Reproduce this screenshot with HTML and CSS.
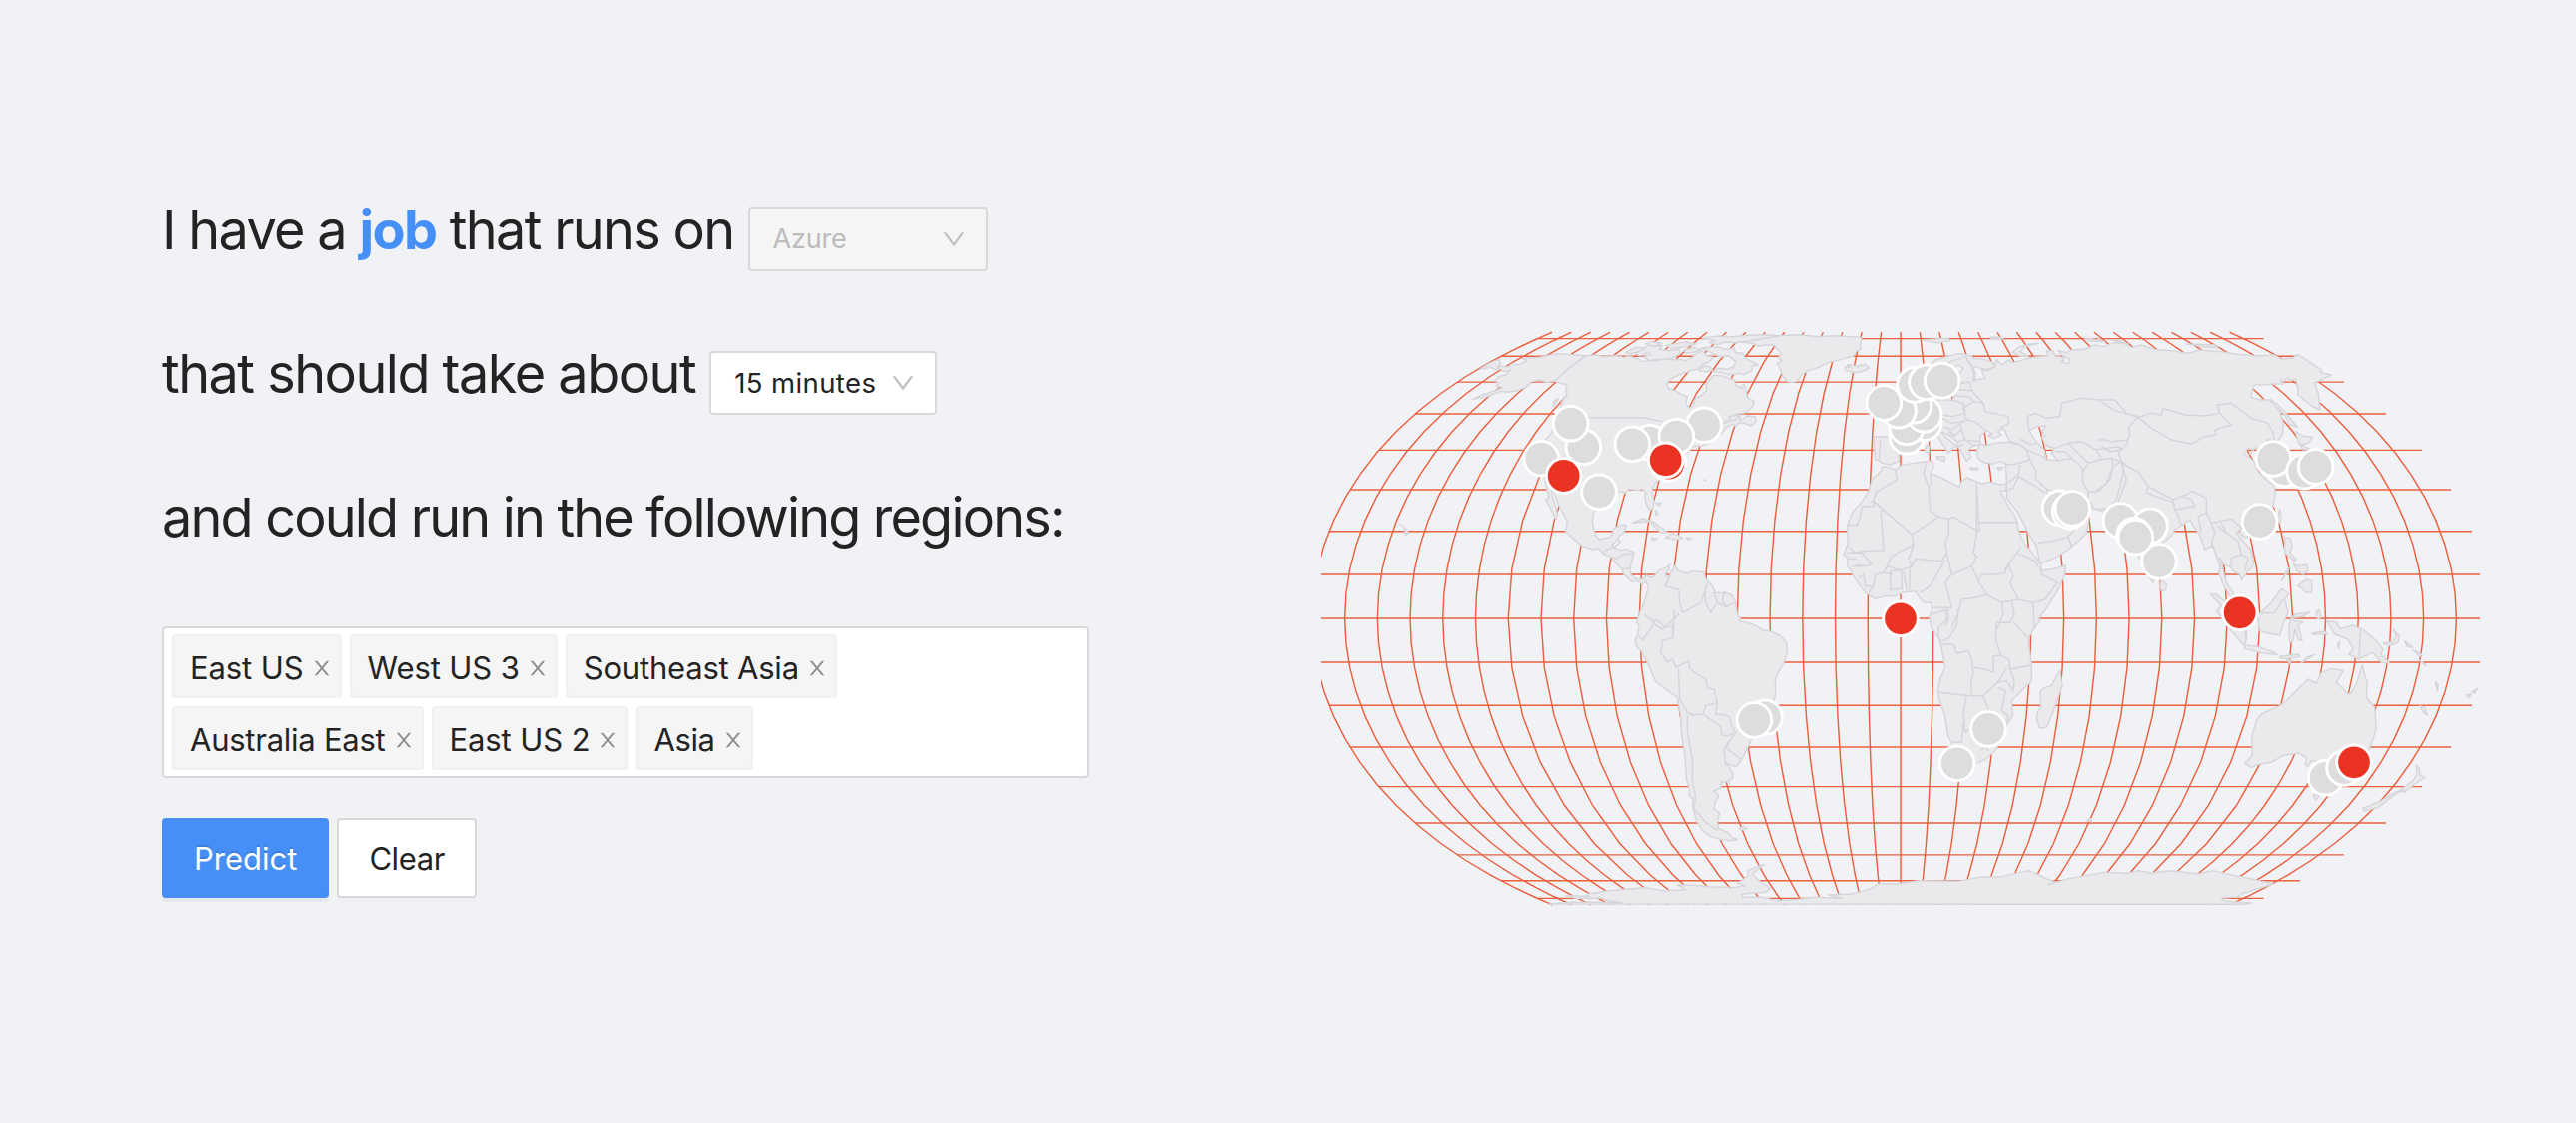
FILE: index.html
```html
<!DOCTYPE html>
<html lang="en">
<head>
<meta charset="utf-8">
<title>Region predictor</title>
<link rel="stylesheet" href="styles.css">
</head>
<body>
<svg class="defs" aria-hidden="true">
  <symbol id="down" viewBox="64 64 896 896"><path d="M884 256h-75c-5.1 0-9.9 2.5-12.9 6.6L512 654.2 227.9 262.6c-3-4.1-7.8-6.6-12.9-6.6h-75c-6.5 0-10.3 7.4-6.5 12.7l352.6 486.1c12.8 17.6 39 17.6 51.7 0l352.6-486.1c3.9-5.3.1-12.7-6.4-12.7z"/></symbol>
  <symbol id="close" viewBox="64 64 896 896"><path d="M563.8 512l262.5-312.9c4.4-5.2.7-13.1-6.1-13.1h-79.8c-4.7 0-9.2 2.1-12.3 5.7L511.6 449.8 295.1 191.7c-3-3.6-7.5-5.7-12.3-5.7H203c-6.8 0-10.5 7.9-6.1 13.1L459.4 512 196.9 824.9A7.95 7.95 0 0 0 203 838h79.8c4.7 0 9.2-2.1 12.3-5.7l216.5-258.1 216.5 258.1c3 3.6 7.5 5.7 12.3 5.7h79.8c6.8 0 10.5-7.9 6.1-13.1L563.8 512z"/></symbol>
</svg>
<main class="page">
  <section class="form">
    <div class="line line-job"><span>I have a <strong>job</strong> that runs on</span>
      <div class="select select-cloud disabled"><span>Azure</span><svg><use href="#down"/></svg></div></div>
    <div class="line line-time"><span>that should take about</span>
      <div class="select select-time"><span>15 minutes</span><svg><use href="#down"/></svg></div></div>
    <div class="line line-regions"><span>and could run in the following regions:</span></div>
    <div class="tags">
      <div class="tag"><span>East US</span><svg><use href="#close"/></svg></div>
      <div class="tag"><span>West US 3</span><svg><use href="#close"/></svg></div>
      <div class="tag"><span>Southeast Asia</span><svg><use href="#close"/></svg></div>
      <div class="tag"><span>Australia East</span><svg><use href="#close"/></svg></div>
      <div class="tag"><span>East US 2</span><svg><use href="#close"/></svg></div>
      <div class="tag"><span>Asia</span><svg><use href="#close"/></svg></div>
    </div>
    <div class="actions">
      <button class="button primary">Predict</button>
      <button class="button clear">Clear</button>
    </div>
  </section>
  <svg class="map" viewBox="0 0 3480 2610">
    <g id="graticule" class="graticule"></g>
    <g id="land" class="land"></g>
    <g id="borders" class="borders"></g>
    <g id="markers" class="markers"></g>
  </svg>
</main>
<script src="map.js"></script>
</body>
</html>
```
FILE: styles.css
```css
* { box-sizing: border-box; }
body { margin: 0; background: #f0f2f5; color: #232323; font-family: Inter, "Noto Sans", sans-serif; }
.defs { display: none; }
.page { display: flex; height: 1124px; overflow: hidden; }
.form { width: 1322px; padding: 157px 232px 0 162px; flex: none; }
.line { display: flex; align-items: center; height: 144px; font-size: 54px; white-space: nowrap; }
.line-job { gap: 14px; letter-spacing: -1.68px; }
.line-time { gap: 14px; letter-spacing: -1.52px; }
.line-regions { letter-spacing: -1.83px; }
.line strong { color: #458ff7; font-weight: 700; }
.select { display: flex; align-items: center; justify-content: space-between; height: 64px; margin-top: 19px; padding: 0 20px 0 23px; border: 2px solid #d9d9d9; border-radius: 4px; background: #fff; font-size: 27px; letter-spacing: 0; }
.select svg { width: 24px; height: 24px; fill: #bfbfbf; }
.select-cloud { width: 240px; letter-spacing: -0.2px; }
.select-time { width: 228px; font-size: 27.5px; letter-spacing: 0.4px; }
.disabled { background: #f5f5f5; color: #bcbcbc; }
.tags { display: flex; flex-wrap: wrap; gap: 8px; align-content: flex-start; width: 928px; height: 152px; margin-top: 38px; padding: 6px 8px; border: 2px solid #d9d9d9; border-radius: 4px; background: #fff; }
.tag { display: flex; align-items: center; gap: 8px; height: 64px; padding: 0 8px 0 16px; border: 2px solid #f0f0f0; border-radius: 4px; background: #f5f5f5; font-size: 31px; letter-spacing: -0.1px; white-space: nowrap; }
.tag span { padding-top: 3px; }
.tag svg { width: 20px; height: 20px; margin-top: 3px; fill: #8c8c8c; }
.tag:nth-child(3) { margin-right: 200px; letter-spacing: -0.2px; }
.tag:nth-child(4) { letter-spacing: -0.25px; }
.tag:nth-child(6) { letter-spacing: -0.4px; }
.actions { display: flex; gap: 8px; margin-top: 40px; }
.button { height: 80px; padding: 0 30px; border: 2px solid #d9d9d9; border-radius: 4px; background: #fff; color: #232323; font: 31px Inter, "Noto Sans", sans-serif; box-shadow: 0 4px 0 rgba(0, 0, 0, .016); }
.clear { letter-spacing: -0.4px; }
.primary { border-color: #458ff7; background: #458ff7; color: #fff; text-shadow: 0 -2px 0 rgba(0, 0, 0, .12); box-shadow: 0 4px 0 rgba(0, 0, 0, .045); }
.map { width: 1160px; height: 870px; margin-top: 184px; flex: none; }
.graticule { fill: none; stroke: #ec5f3f; stroke-width: 4.3; }
.land { fill: #eaeaec; fill-rule: evenodd; stroke: #d6d6da; stroke-width: 4.3; stroke-linejoin: round; }
.borders { fill: none; stroke: #d6d6da; stroke-width: 4.3; stroke-linejoin: round; }
.markers { fill: #ddd; stroke: #fff; stroke-width: 8.7; }
.markers .active { fill: #ea3323; }
```
FILE: map.js
```js
// The map is digitised in six sheets; a letter switches to that sheet's origin.
const SHEETS = { a: [-36, 408], b: [1194, 408], c: [2334, 408], d: [-36, 1278], e: [1194, 1278], f: [2334, 1278] };
function points(text) {
  let o = SHEETS.a;
  const out = [];
  for (const t of text.trim().split(/\s+/)) {
    if (SHEETS[t]) o = SHEETS[t];
    else { const [x, y] = t.split(',').map(Number); out.push([x + o[0], y + o[1]]); }
  }
  return out;
}
const trace = (text, close) => 'M' + points(text).map(p => p.join(' ')).join('L') + (close ? 'Z' : '');
function add(id, tag, attrs) {
  const el = document.createElementNS('http://www.w3.org/2000/svg', tag);
  for (const k in attrs) el.setAttribute(k, attrs[k]);
  document.getElementById(id).appendChild(el);
}

// Equal Earth projection
const S = 653, CX = 1740, CY = 1305;
function project(lon, lat) {
  const l = lon * Math.PI / 180, q = Math.asin(Math.sqrt(3) / 2 * Math.sin(lat * Math.PI / 180));
  const q2 = q * q, q6 = q2 * q2 * q2;
  const x = l * Math.cos(q) / (Math.sqrt(3) / 2 * (1.340264 - 0.243318 * q2 + q6 * (0.006251 + 0.034164 * q2)));
  const y = q * (1.340264 - 0.081106 * q2 + q6 * (0.000893 + 0.003796 * q2));
  return (CX + S * x).toFixed(1) + ' ' + (CY - S * y).toFixed(1);
}
for (let lon = -180; lon < 180; lon += 10) {
  const p = [], step = Math.abs(lon) > 125 ? 5.625 : 11.25;
  for (let lat = -90; lat <= 90; lat += step) p.push(project(lon, lat));
  add('graticule', 'path', { d: 'M' + p.join('L') });
}
for (let lat = -80; lat <= 80; lat += 10) add('graticule', 'path', { d: 'M' + project(-180, lat) + 'L' + project(180, lat) });

const LAND = [
  // Americas
  `a 512,148 540,130 568,118 575,132 565,138 600,140 606,132 628,135 655,122 640,116 690,112 718,106 745,101 790,104 830,107 862,105 880,110 920,107 945,112 960,108 990,118 1000,125 1030,120 1040,123 1070,115 1085,120 1110,118 1130,122 1150,112 1160,102 1180,92 1195,108 1215,112 1200,125 1180,135 1165,148 1145,152 1130,158 1110,165 1080,180 1074,192 1078,207 1100,213 1118,224 1135,230 1130,248 1140,265 1152,258 1160,235 1180,225 1194,210 1190,195 1200,180 1215,165 1240,168 b 30,176 45,180 52,196 68,205 75,192 82,215 85,232 105,245 103,258 92,268 75,280 50,283 30,296 14,310 28,306 50,292 64,290 62,303 85,288 108,290 112,306 95,318 78,310 60,308 50,320 40,312 20,325 10,338 a 1225,348 1200,370 1180,378 1150,380 1140,395 1125,400 1120,430 1110,450 1085,465 1050,480 1035,495 1028,515 1035,545 1030,570 1018,568 1008,540 1010,520 1000,508 985,512 960,508 950,520 930,515 910,520 870,560 853,580 850,610 858,645 870,660 905,652 915,625 940,615 952,618 945,638 932,648 925,660 912,672 915,685 935,692 950,688 975,698 970,720 963,745 965,765 980,778 1000,780 1012,768 1030,775 1040,765 1050,752 1070,745 1082,735 1080,750 1068,765 1080,775 1084,760 1092,752 1096,738 1110,755 1135,762 1150,755 1185,758 1188,775 1210,800 1220,820 1245,822 b 15,818 40,828 48,845 52,860 55,885 65,900 e 60,35 85,40 110,48 130,62 152,65 182,78 202,98 206,128 195,160 175,195 169,215 170,255 162,290 150,325 110,370 95,395 80,430 62,460 52,473 35,468 20,460 42,492 40,508 25,518 5,520 d 1238,522 1235,537 1215,545 1230,560 1218,582 1215,600 1232,612 1225,640 1228,658 1258,672 1270,685 1285,692 1258,695 1230,690 1205,682 1180,665 1165,640 1158,620 1150,590 1153,570 1140,560 1142,540 1132,510 1128,440 1118,380 1115,320 1105,265 1070,240 1040,218 1020,170 1000,130 980,108 979,90 985,80 990,50 982,40 990,15 a 992,880 1005,850 1018,805 1010,785 1000,795 985,785 970,788 945,765 940,750 920,730 905,712 885,705 870,687 850,690 820,680 790,655 770,635 775,605 765,585 752,562 745,545 728,500 728,525 740,560 745,580 742,598 738,595 728,573 710,540 720,535 712,500 708,480 695,440 692,410 710,360 730,335 750,290 757,250 765,235 775,225 770,212 774,195 755,190 735,183 715,188 690,180 668,185 648,203 625,212 600,216 575,215 540,228 490,238 520,225 560,212 580,203 562,198 570,190 558,182 568,170 590,165 605,150 585,155 570,143 560,150 545,142`,
  // Greenland and Iceland
  `b 118,78 100,70 60,65 40,60 70,57 130,52 180,47 240,44 300,50 340,47 400,50 425,52 430,60 423,75 428,85 412,95 405,108 370,118 340,124 320,132 300,142 270,152 247,165 238,182 220,188 204,184 190,165 186,150 175,130 190,122 177,113 188,103 178,90 165,76 140,75`,
  `b 378,140 395,142 385,134 415,138 440,133 452,145 430,155 408,158 380,152`,
  // Arctic islands
  `a 990,92 1020,75 1060,78 1050,88 1080,92 1110,88 1115,100 1095,112 1060,118 1020,122 1005,110 1025,104 1015,97 995,108 980,103`,
  `a 950,97 980,82 1010,84 990,94 965,102`,
  `a 1010,70 1030,65 1060,70 1040,78 1020,76`,
  `a 1070,76 1130,66 1160,72 1120,82 1085,84`,
  `a 1125,90 1155,82 1175,90 1150,98 1130,98`,
  `a 1180,55 1230,48 b 40,50 90,46 140,44 180,47 120,58 90,62 50,68 20,66 a 1225,74 1200,68 1220,62`,
  `a 1175,84 1225,80 b 20,88 45,85 50,98 70,100 80,115 100,125 118,135 100,138 98,152 75,165 60,160 30,165 10,158 a 1215,155 1225,145 1255,148 b 45,140 50,125 30,108 a 1230,110 1210,100 1195,92`,
  `a 1180,140 1200,138 1210,152 1190,155 1170,152`,
  `b 30,290 62,285 50,300 35,302`,
  // Africa
  `b 490,442 500,440 530,450 550,436 600,428 640,423 645,440 636,462 660,470 690,485 722,502 730,485 745,474 790,492 815,487 845,495 866,492 862,515 845,512 870,560 892,592 903,640 920,675 942,700 968,733 970,752 1000,750 1042,738 1040,765 1020,810 990,860 960,900 e 965,35 942,65 930,90 935,130 940,165 940,215 915,240 880,275 883,320 867,345 855,385 830,425 800,452 775,463 740,466 715,475 705,440 700,400 688,380 680,320 662,270 658,245 665,210 680,175 670,120 660,85 640,58 633,25 b 634,890 640,870 638,850 618,850 605,838 590,815 560,818 530,830 500,830 470,838 440,820 418,790 400,762 385,735 388,715 375,705 388,670 385,620 400,580 430,545 450,515 460,480 490,450`,
  `e 1025,183 1032,230 1020,265 1000,320 985,355 965,358 955,330 958,310 968,290 965,250 975,238 1000,228`,
  // Eurasia with the Black Sea, Caspian and Aral basins left open
  `b 490,430 480,422 470,420 468,400 465,352 500,350 520,352 540,340 515,312 540,300 570,285 590,260 600,230 610,210 640,240 700,240 712,228 705,208 726,200 728,190 755,187 730,188 714,170 735,145 720,135 700,150 690,200 660,230 640,200 600,195 600,170 630,140 650,120 690,108 725,100 760,108 765,115 790,116 825,127 828,142 800,148 770,140 760,148 772,160 770,180 800,175 790,150 810,152 830,140 835,118 850,135 870,120 885,128 920,118 945,112 990,107 985,92 1005,92 1010,108 1035,112 1038,120 1028,125 1050,132 1056,118 1035,108 1020,92 1045,98 1060,90 1100,88 1130,75 1155,80 1190,68 1230,72 c 40,60 65,62 100,82 130,75 170,88 220,92 270,100 305,90 370,95 410,102 480,108 530,105 550,117 580,115 600,104 625,120 655,140 672,150 668,158 700,165 665,182 650,190 662,225 665,270 640,258 600,225 600,205 592,175 580,182 568,175 550,187 548,176 555,192 520,192 500,195 468,195 458,233 488,240 520,240 545,275 556,310 553,345 540,362 505,360 530,400 530,450 510,450 500,420 490,385 470,385 455,402 465,390 450,385 436,404 450,410 468,425 480,455 505,480 525,495 532,515 525,560 512,590 485,630 455,648 440,655 425,640 430,625 415,640 440,670 458,690 468,735 450,755 430,782 425,765 405,755 395,740 380,738 365,715 385,790 400,812 410,830 395,830 375,795 362,760 365,740 352,700 345,678 320,690 310,660 302,640 285,618 275,600 255,615 232,628 220,648 195,670 185,720 165,790 148,765 130,725 105,690 70,640 45,620 25,580 0,570 b 1125,568 1120,550 1095,545 1055,540 1005,515 985,508 990,530 1020,560 1060,560 1075,570 1112,600 1105,640 1085,660 1050,690 1010,715 965,733 955,680 930,640 900,580 865,535 866,500 862,432 845,425 822,433 800,430 778,415 775,395 785,375 765,378 750,390 758,410 745,425 732,400 718,380 715,365 690,345 665,335 680,350 715,380 705,383 690,400 655,345 630,350 600,370 565,400 540,405 540,425 515,435 M0`,
  // Indian Ocean and East Asian islands
  `c 190,780 205,795 203,812 190,815 186,800`,
  `c 545,570 549,590 546,612 538,600`,
  `c 515,240 535,250 555,270 575,295 598,322 575,315 560,285 535,262`,
  `c 592,335 612,348 645,352 630,370 610,375 635,388 615,390 600,365`,
  `c 630,390 640,420 620,450 575,480 560,500 550,470 600,430`,
  `c 560,655 575,655 583,680 575,700 595,718 590,725 572,710 560,700`,
  `c 585,732 600,740 625,735 630,755 615,765 598,755`,
  `c 598,800 625,780 642,785 640,820 622,818 610,805`,
  `c 550,783 572,745 568,760`,
  // Maritime South-East Asia
  `c 338,825 355,825 400,865 440,900 f 445,35 445,90 437,108 400,65 355,5 c 370,860`,
  `c 485,882 520,850 550,808 572,822 560,840 570,880 f 560,30 545,78 510,72 485,65 478,15`,
  `f 440,108 480,112 525,128 537,136 495,132 440,118`,
  `c 580,900 592,885 630,880 635,878 615,892 590,895 f 585,20 588,35 615,38 600,48 612,95 600,90 590,60 585,95 575,100 572,55 580,20`,
  `f 685,35 715,38 725,58 765,48 800,65 835,95 855,120 848,135 875,162 850,160 825,130 780,150 752,135 765,120 750,90 710,75 700,58`,
  `f 855,102 885,98 895,80 885,60 905,80 900,100 875,110`,
  `f 545,142 600,135 605,142 570,148 548,148`, `f 610,160 630,142 648,137`, `f 640,72 680,66 688,74 645,75`, `f 565,150 580,155 575,162`, `c 655,878 662,870 668,890 664,900 656,895`, `f 718,105 725,98 722,118`,
  `f 920,95 945,115 928,112`, `f 945,122 970,135 965,142`, `f 962,150 985,168 970,160`, `f 1012,218 1020,225 1018,245`, `f 1105,258 1120,255 1112,267`, `f 1122,248 1140,237 1130,252`, `f 966,290 980,295 988,318 975,308`,
  // Australia and New Zealand
  `f 793,167 800,200 808,220 805,265 830,295 835,355 825,390 810,430 760,500 700,500 650,455 640,455 630,472 622,468 625,445 600,432 555,440 520,460 485,465 460,475 440,463 462,440 462,380 475,335 490,315 545,290 570,270 600,240 630,210 655,222 670,190 700,178 735,185 715,220 755,258 775,225`,
  `f 645,558 670,557 652,573`,
  `f 955,468 965,480 965,500 982,505 950,525 920,550 905,545 945,515 957,495`,
  `f 920,542 900,550 840,595 800,606 795,598 850,575 890,550`,
  // Mediterranean, Arctic and Atlantic islands
  `b 655,410 680,412 678,425 658,418`, `b 625,375 632,380 630,400 618,395`, `b 755,445 780,445 778,450 758,450`, `b 835,445 855,442 845,452`, `b 610,60 650,57 690,55 695,62 660,68 635,65`, `b 815,52 850,52 855,57 820,57`, `b 882,98 900,82 935,72 960,70 920,80 905,95 930,110 905,108`, `b 1100,55 1130,58 1160,65 1110,62`, `c 0,52 10,62 0,64`, `c 265,72 350,75 360,83 310,80`,
  `a 970,610 1000,597 1030,605 1075,638 1055,638 1020,605`, `a 1070,655 1090,640 1122,655 1100,660`, `a 1027,655 1045,658 1032,662`, `a 1133,655 1148,657 1136,661`, `a 1040,550 1055,550 1050,558`, `a 1040,572 1048,582 1040,587`, `a 285,622 298,638 290,648`, `a 270,614 282,618`, `a 735,243 748,237 732,260`, `a 1185,480 1191,482`,
  `e 60,658 75,652 85,660 65,663`, `e 1105,635 1115,628 1120,638`, `e 30,520 32,525`,
  // Antarctica
  `d 720,885 790,880 880,880 940,882 890,873 880,868 800,868 770,860 840,862 835,855 900,845 960,840 1010,836 1060,845 1130,842 1105,828 1140,828 1200,833 1260,835 e 30,838 80,830 55,823 90,800 85,785 110,775 135,766 100,795 120,815 155,838 140,850 70,855 70,865 130,865 175,875 230,872 290,865 370,868 330,858 400,855 450,842 480,825 540,825 600,815 720,817 780,805 850,803 930,785 960,797 985,810 1010,818 990,828 1040,812 1100,800 1160,790 1230,793 f 80,795 120,785 160,792 220,785 300,795 345,785 410,800 440,805 525,825 430,855 420,863 370,868 380,877 460,882 440,886`
];
const HOLES = `b 785,350 803,332 822,342 810,348 825,356 850,345 838,335 855,325 875,365 905,375 870,367 830,370 800,378 785,370|b 932,332 955,320 985,318 970,332 982,350 970,352 985,378 1008,385 1000,400 1020,422 985,420 978,390 950,360`;
LAND.forEach(t => {
  const holed = t.endsWith('M0');
  let d = trace(t.replace(' M0', ''), true);
  if (holed) d += HOLES.split('|').map(h => trace(h, true)).join('');
  add('land', 'path', { d });
});

const BORDERS = [
  // North and Central America
  'a 735,183 780,145 830,107', 'a 740,293 1000,293 1025,298 1060,305', 'a 885,705 890,690 905,688 912,672', 'a 920,720 940,705 970,700', 'a 915,685 935,665 925,660', 'a 940,750 965,745', 'a 905,712 920,715',
  // South America
  'a 1080,775 1068,800 1110,812 1112,850 1120,880 1140,870 1175,850 1188,815 1195,790', 'a 1188,815 1190,850 1205,880 1225,850 1215,820', 'a 1225,850 1258,865', 'a 1245,822 1240,845 1250,862 b 45,850', 'a 1005,885 1025,900 1040,918 1060,930 1095,900 1110,880', 'd 1040,30 1025,58 1002,92 990,82', 'd 1040,30 1070,55 1092,50 1090,85 1060,95 1055,130 1075,158 1090,150 1100,175 1140,155 1142,180 1190,210 1197,238 1215,240 1225,280 1190,290 1182,315 1150,318 1135,310 1112,270 1108,180', 'd 1095,0 1092,85', 'd 1225,280 1220,315 e 20,318 32,325 38,350 50,370 20,415 65,450', 'd 1182,315 1210,335 1235,352 1238,378 e 30,380 45,370', 'd 1250,470 1245,420 1260,395', 'd 1135,318 1135,370 1150,450 1150,520 1160,560 1155,600 1190,640 1228,665',
  // West and north Africa
  'b 530,450 535,480 500,500 470,520 465,545 580,645 660,592 635,575 630,500 615,460 625,425', 'b 455,545 465,545 465,560 430,560 425,590 415,617 387,617', 'b 465,545 495,570 487,575 495,692 430,695 410,700 390,680', 'b 635,462 640,490 632,500', 'b 660,592 690,598 705,592 780,635 775,640 775,500', 'b 783,608 900,608', 'b 775,490 783,635', 'b 580,645 585,675 555,690 520,710 505,740 495,760 470,765 465,800 450,820', 'b 585,675 570,720 580,742 590,718 670,725 685,700 680,670 692,640 690,598', 'b 415,735 440,740 460,735 430,700 385,700', 'b 385,718 412,718', 'b 400,740 430,740', 'b 420,775 435,765 440,800', 'b 440,800 465,800', 'b 515,755 515,812 550,808 548,752 515,755', 'b 555,755 565,812', 'b 575,740 572,812', 'b 505,740 545,752 578,742', 'b 495,760 520,765', 'b 605,820 635,800 670,740 680,720',
  // Central and east Africa
  'b 685,700 700,765 680,790 690,825 700,865 640,865', 'b 700,765 760,740 775,710 765,700 775,640', 'b 760,740 780,785 805,825 770,835 730,840 720,880 700,925', 'b 780,785 790,765 830,765 860,760 870,735 860,750', 'b 870,735 895,700 910,680', 'b 895,700 920,710 950,725 962,745', 'b 870,735 885,770 875,790 900,840 945,850 980,840 1018,790 970,765 965,745', 'b 805,825 850,850 900,840', 'b 945,850 948,930', 'b 850,850 855,885 835,930', 'b 880,848 888,885 875,910', 'b 640,885 688,870 690,900 680,920', 'e 720,0 715,50 690,88 665,95', 'e 680,0 685,30 660,55 660,85', 'e 668,105 705,105 715,132 750,125 760,150 765,195 758,220 760,260 660,250', 'e 835,40 832,90 848,138 825,140 825,190 800,180 765,175', 'e 835,40 875,40', 'e 885,38 928,85', 'e 848,138 872,152 875,180 938,168', 'e 875,180 888,215 885,245 865,215 838,220 795,260 760,260', 'e 745,260 735,310 740,370 800,330 810,300 795,260', 'e 838,235 862,245 850,305 870,320 862,345', 'e 700,400 730,400 735,340', 'e 838,220 865,175', 'e 785,425 800,415 810,425',
  // Europe
  'b 485,362 482,420', 'b 540,355 570,375', 'b 700,240 735,250 740,280 705,290 670,285', 'b 712,228 755,230 765,245 735,265', 'b 705,208 760,212', 'b 765,245 795,250 800,275 870,290 872,310 845,325', 'b 735,265 745,300 770,305 800,330', 'b 755,190 762,215 795,250', 'b 670,295 700,310 740,305', 'b 675,320 700,330 740,300', 'b 690,335 710,345 730,330 725,310', 'b 730,330 740,360 785,365', 'b 715,365 740,360 765,378', 'b 690,345 712,350', 'b 720,380 735,372', 'b 690,200 680,160 695,125 730,115 740,108', 'b 740,108 768,150 765,185',
  // Middle East and Central Asia
  'b 905,375 925,390 935,420 895,432 862,435', 'b 905,358 940,375 955,370', 'b 925,390 985,415', 'b 905,435 900,465 868,490', 'b 870,510 885,505 900,470 945,495 980,520', 'b 935,420 955,455 950,475 985,508', 'b 960,670 1000,665 1050,652 1090,605 1065,590', 'b 1050,652 1060,680', 'b 1020,422 1060,415 1092,445 1095,490 1110,515 1110,545 1125,568', 'b 1060,415 1040,395 1010,395', 'b 932,332 928,290 950,280 985,295 1025,290 1030,250 1090,235 1140,240 1190,240 1225,280 1260,290', 'b 985,378 1010,385 1050,370 1080,400 1110,430 1095,455', 'b 1050,370 1090,365 1135,390 1200,380 1215,390', 'b 1110,430 1145,420 1180,415 1185,440 1165,490 1130,518 1112,515', 'b 1180,415 1215,430 1215,460 1195,540 1165,570 1125,568', 'b 1135,390 1150,418', 'c 0,240 50,272 100,285 120,292 92,320 95,345 85,375 60,395 70,425 95,445 120,455 150,500 225,540 250,530 285,515 325,535 325,580 340,610 400,598', 'c 120,292 160,280 190,285 195,265 260,285 320,288 365,280 358,255 400,250 460,295 510,310 525,340 530,365', 'c 120,292 160,325 220,360 280,372 320,350 355,345 350,330 400,315 365,280', 'c 0,360 20,360 40,365 90,360', 'c 10,380 35,395 70,390', 'c 0,515 35,480 45,440 70,425', 'c 0,570 55,560 85,480 70,430', 'c 150,500 145,520 225,548 228,560 250,615', 'c 225,540 230,570 290,560 280,540 250,530', 'c 325,580 300,590 310,640', 'c 340,610 350,640 340,670 360,720', 'c 360,620 385,640 420,665 430,705 400,715 400,745', 'c 400,598 430,625', 'c 370,610 385,640', 'c 430,705 450,715 440,755', 'c 488,882 530,880 555,840',
  'f 787,62 783,148', 'f 440,65 445,95'
];
BORDERS.forEach(t => add('borders', 'path', { d: trace(t, false) }));

const MARKERS = [
  'a 697,416 823,382 785,311 870,517 1022,368 970,373 1185,316 1102,350', 'active a 1078,431 1070,421 764,468',
  'b 565,350 617,310 565,322 617,284 586,257 540,272 496,249 588,195 624,187 671,182 1025,565 1055,575 1063,567',
  'c 67,603 156,619 108,647 183,726 112,653 485,606 560,448 526,417 618,455 653,441',
  'e 138,325 106,333 810,360 716,463', 'f 683,506 738,477', 'active f 768,460 c 425,880 b 546,898'
];
MARKERS.forEach(t => points(t.replace('active ', '')).forEach(([cx, cy]) =>
  add('markers', 'circle', Object.assign({ cx, cy, r: 52 }, t.startsWith('active') ? { class: 'active' } : {}))));
```
